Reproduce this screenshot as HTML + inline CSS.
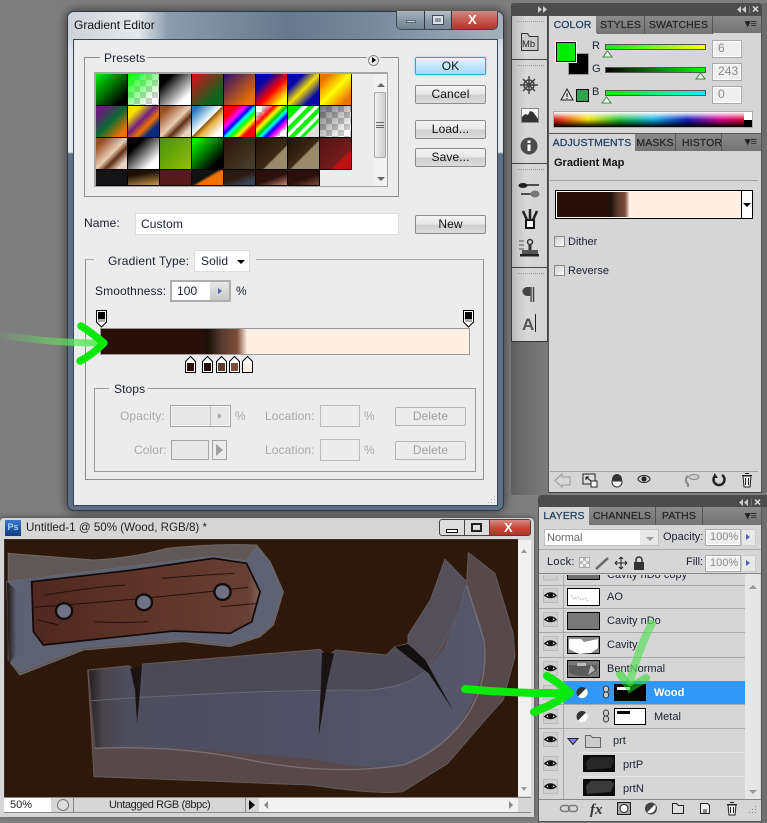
<!DOCTYPE html>
<html><head><meta charset="utf-8"><style>
html,body{margin:0;padding:0;width:767px;height:823px;overflow:hidden;background:#7e7e7e}
*{box-sizing:border-box}
body{position:relative;font:12px "Liberation Sans",sans-serif;color:#1a2030;letter-spacing:.1px}
div,span.t{position:absolute}
.t{white-space:nowrap;line-height:14px}
.s{font-size:11px;letter-spacing:0}
.b{border-radius:2px;border:1px solid #8c8c8c;background:linear-gradient(#f4f4f4,#e8e8e8 45%,#cfcfcf 55%,#dcdcdc);text-align:center;line-height:17px;color:#111;left:415px;width:71px;height:19px}
.f{border:1px solid #8e8e8e}
.c{width:32px;height:32px;border-right:1px solid #000;border-bottom:1px solid #000}
.tab{top:0;height:18px;background:linear-gradient(#8a8a8a,#747474);border-right:1px solid #555;font-size:10.5px;color:#262626;-webkit-text-stroke:.25px #262626;text-align:center;line-height:18px;letter-spacing:.1px}
.act{background:#d6d6d6;color:#23405f;-webkit-text-stroke:.25px #23405f;border:0}
.g{color:#a8a8a8}
.in{background:#efefef;border:1px solid #aaa;box-shadow:inset 0 0 0 1px #fff;color:#8a8a8a;font-size:12px;padding-left:5px;line-height:15px}
.th{width:33px;height:18px;border:1px solid #000}
.menu{color:#222;font:bold 11px 'Liberation Sans';line-height:12px;text-align:right;white-space:nowrap}
</style></head><body>

<!-- right panel group -->
<div style="left:511px;top:342px;width:37px;height:153px;background:linear-gradient(90deg,#626262,#7c7c7c)"></div>
<div style="left:511px;top:3px;width:251px;height:13px;background:#4c4c4c;border-radius:3px 3px 0 0"></div>
<div style="left:511px;top:16px;width:2px;height:326px;background:#3d3d3d"></div>
<div style="left:512px;top:16px;width:36px;height:326px;background:linear-gradient(90deg,#bdbdbd,#d8d8d8 40%,#d4d4d4);border-bottom:1px solid #333;border-right:1px solid #444"></div>
<div style="left:548px;top:16px;width:214px;height:477px;background:#d6d6d6;border-left:1px solid #555;border-right:1px solid #555;border-bottom:1px solid #444"></div>
<div style="left:762px;top:3px;width:5px;height:490px;background:#6c6c6c"></div>
<div style="left:512px;top:59px;width:36px;height:1px;background:#444"></div>
<div style="left:512px;top:163px;width:36px;height:1px;background:#444"></div>
<div style="left:512px;top:267px;width:36px;height:1px;background:#444"></div>
<svg style="position:absolute;left:511px;top:3px" width="251" height="13"><g fill="#ccc"><path d="M27 3l4 3.500-4 3.500zM32 3l4 3.500-4 3.500z"/><path d="M230 3l-4 3.500 4 3.500zM235 3l-4 3.500 4 3.500z"/></g><path d="M238.500 3v7" stroke="#777"/><path d="M242 3.500l5 5M247 3.500l-5 5" stroke="#ddd" stroke-width="1.500"/></svg>
<svg style="position:absolute;left:512px;top:16px" width="36" height="326" viewBox="0 0 36 326">
<g stroke="#999" stroke-dasharray="1 1" fill="none"><path d="M5 5.500H32M5 49.500H32M5 153.500H32M5 257.500H32"/></g>
<path d="M9.500 17.500h6l2 3h8.500v14H9.500z" fill="#ccc" stroke="#333"/><text x="10" y="31" font-size="9.500" font-family="Liberation Sans" fill="#222" letter-spacing="0">Mb</text>
<g stroke="#444" fill="none" stroke-width="1.500"><circle cx="17" cy="69" r="5"/><circle cx="17" cy="69" r="1.500" fill="#444"/><path d="M17 60V78M8 69H26M11 63L23 75M23 63L11 75"/></g>
<rect x="9.500" y="92.500" width="17" height="14" fill="#f4f4f4" stroke="#888"/><path d="M10 106V101L13 98 16 99 18 95 21 96 24 100 26 103V106z" fill="#333"/>
<circle cx="17" cy="130" r="8.500" fill="#4c4c4c"/><rect x="15.500" y="128.500" width="3" height="6.500" fill="#fff"/><rect x="15.500" y="124.500" width="3" height="2.500" fill="#fff"/>
<path d="M7 169H27M9 178H20" stroke="#222" stroke-width="1.500"/><ellipse cx="11" cy="169.500" rx="4.500" ry="2.500" fill="#222"/><ellipse cx="23" cy="178" rx="4.500" ry="3.500" fill="#777"/>
<rect x="14" y="204" width="8" height="8" fill="#fff" stroke="#111" stroke-width="2"/><path d="M15 204L11 195M18 204V193M21 204L25 195" stroke="#222" stroke-width="2.500"/>
<path d="M7 225h5M7 229h5M7 233h5" stroke="#555"/><circle cx="18" cy="226" r="2.500" fill="none" stroke="#333" stroke-width="1.500"/><rect x="16.500" y="228" width="3" height="6" fill="#333"/><rect x="10" y="234" width="16" height="4" fill="#555"/><rect x="8" y="238" width="19" height="2.500" fill="#222"/>
<path d="M19 271h-4a4.500 4.500 0 0 0 0 9h4z" fill="#444"/><path d="M19 271v15" stroke="#555" stroke-width="1.500"/><path d="M21.500 271v15" stroke="#444" stroke-width="1.500"/>
<text x="10" y="314" font-size="17" font-family="Liberation Sans" font-weight="bold" fill="#555" letter-spacing="0">A</text><path d="M23.500 298V316" stroke="#222"/>
</svg>

<!-- color tabs -->
<div style="left:549px;top:16px;width:212px;height:17px;background:linear-gradient(#8a8a8a,#737373)"></div>
<div style="left:549px;top:16px;width:212px;height:17px">
<div class="tab act" style="left:0;width:47px">COLOR</div>
<div class="tab" style="left:48px;width:48px">STYLES</div>
<div class="tab" style="left:96px;width:68px">SWATCHES</div>
<div class="menu" style="left:183px;top:2px;width:25px;height:12px">▾≡</div>
</div>
<div style="left:569px;top:54px;width:19px;height:20px;background:#000;border:1px solid #000;box-shadow:0 0 0 1px #999"></div>
<div style="left:556px;top:42px;width:20px;height:20px;background:#00ed00;border:1px solid #000;box-shadow:0 0 0 1px #fff"></div>
<span class="t s" style="left:592px;top:39px">R</span>
<span class="t s" style="left:592px;top:62px">G</span>
<span class="t s" style="left:592px;top:85px">B</span>
<div style="left:605px;top:44px;width:101px;height:6px;background:linear-gradient(90deg,#06f300,#ffff00);border:1px solid #555"></div>
<div style="left:605px;top:67px;width:101px;height:6px;background:linear-gradient(90deg,#060000,#06ff00);border:1px solid #555"></div>
<div style="left:605px;top:90px;width:101px;height:6px;background:linear-gradient(90deg,#06f300,#06f3ff);border:1px solid #555"></div>
<svg style="position:absolute;left:600px;top:50px" width="110" height="55"><g fill="#fff" stroke="#3a8a3a"><path d="M3 7L7.500 1 12 7z"/><path d="M96 29L100.500 23 105 29z"/><path d="M2 53L6.500 47 11 53z"/></g></svg>
<div class="in" style="left:712px;top:40px;width:30px;height:18px">6</div>
<div class="in" style="left:712px;top:63px;width:30px;height:18px">243</div>
<div class="in" style="left:712px;top:86px;width:30px;height:18px">0</div>
<svg style="position:absolute;left:560px;top:88px" width="14" height="14"><path d="M7 1L13 12H1z" fill="#ddd" stroke="#222"/><path d="M7 5v4M7 10v1" stroke="#111"/></svg>
<div style="left:576px;top:89px;width:13px;height:13px;background:#2fa34f;border:1px solid #000"></div>
<div style="left:553px;top:111px;width:200px;height:17px;border:1px solid #aaa;background:linear-gradient(#fff,rgba(255,255,255,0) 50%,#000),linear-gradient(90deg,#e0101a,#f5e000 17%,#20c030 33%,#10b0e8 50%,#1020c0 67%,#e00090 84%,#e0101a)"></div>
<div style="left:744px;top:112px;width:8px;height:8px;background:#fff"></div>
<div style="left:744px;top:120px;width:8px;height:7px;background:#000"></div>

<!-- adjustments -->
<div style="left:549px;top:133px;width:212px;height:18px;background:linear-gradient(#8a8a8a,#737373);border-top:1px solid #555"></div>
<div style="left:549px;top:134px;width:212px;height:18px">
<div class="tab act" style="left:0;width:86px;height:17px">ADJUSTMENTS</div>
<div class="tab" style="left:86px;width:41px;height:17px">MASKS</div>
<div class="tab" style="left:127px;width:46px;height:17px;overflow:hidden;text-align:left;padding-left:6px">HISTORY</div>
<div class="menu" style="left:183px;top:2px;width:25px;height:12px">▾≡</div>
</div>
<span class="t s" style="left:554px;top:156px;font-weight:bold;color:#111">Gradient Map</span>
<div style="left:550px;top:180px;width:208px;height:1px;background:#a0a0a0"></div>
<div style="left:555px;top:190px;width:198px;height:29px;border:1px solid #000;background:#fff"></div>
<div style="left:557px;top:192px;width:184px;height:25px;background:linear-gradient(90deg,#2a0f0a,#2a0f0a 27%,#1b0f09 29%,#5a3c30 33%,#7d4d38 37%,#fff0e5 39.500%,#fff0e5)"></div>
<div style="left:741px;top:191px;width:1px;height:27px;background:#000"></div>
<div style="left:743px;top:203px;width:0;height:0;border:4px solid transparent;border-top:4px solid #000"></div>
<div style="left:554px;top:236px;width:11px;height:11px;background:linear-gradient(135deg,#ccc,#fff);border:1px solid #888"></div>
<span class="t s" style="left:568px;top:235px">Dither</span>
<div style="left:554px;top:265px;width:11px;height:11px;background:linear-gradient(135deg,#ccc,#fff);border:1px solid #888"></div>
<span class="t s" style="left:568px;top:264px">Reverse</span>
<div style="left:550px;top:471px;width:208px;height:1px;background:#a0a0a0"></div>
<svg style="position:absolute;left:550px;top:472px" width="210" height="20">
<path d="M5 8.500L12 2V5H20V13H12V15z" fill="#d8d8d8" stroke="#999"/>
<rect x="33" y="2" width="12" height="10" fill="#ddd" stroke="#222"/><rect x="41" y="9" width="6" height="6" fill="#fff" stroke="#222"/><path d="M36 5L41 9M36 5h3M36 5v3" stroke="#111" fill="none"/>
<path d="M62 7a5 5 0 0 1 10 0V9H62z" fill="#333"/><path d="M62 9h10v1a5 5 0 0 1-10 0z" fill="#fff" stroke="#333"/>
<ellipse cx="94" cy="7" rx="6" ry="3.500" fill="#ccc" stroke="#222"/><circle cx="94" cy="7" r="2.500" fill="#222"/>
<ellipse cx="144" cy="5" rx="5" ry="2.500" fill="#ccc" stroke="#888"/><path d="M138 4a5 5 0 0 0 0 8v3" fill="none" stroke="#888" stroke-width="2"/>
<path d="M166 3A5.500 5.500 0 1 0 172 3" fill="none" stroke="#222" stroke-width="2.500"/><path d="M164 1v5h4" fill="#222"/>
<path d="M193 4h8l-1 11h-6z" fill="#eee" stroke="#222"/><path d="M192 3.500h10M195 1.500h4M195.500 6v7M198.500 6v7" stroke="#222"/>
</svg>

<!-- dialog -->
<div style="left:67px;top:11px;width:437px;height:500px;border-radius:7px;border:1px solid #2d3a48;background:linear-gradient(#b8c0c8,#dfe3e7 40px,#e4e7ea 140px,#5f7086 142px,#5f7086);box-shadow:0 0 11px rgba(0,0,0,.6)"></div>
<div style="left:68px;top:12px;width:435px;height:27px;border-radius:6px 6px 0 0;background:linear-gradient(90deg,#cdd2d7 0,#e6e9eb 70px,#8d9cac 100px,#66798e 220px,#76889b 300px,#a7b1ba 435px)"></div>
<span class="t" style="left:74px;top:18px;color:#111;letter-spacing:0">Gradient Editor</span>
<div style="left:396px;top:11px;width:102px;height:19px;border:1px solid #3b4956;border-top:0;border-radius:0 0 5px 5px;background:#7b8b9a;overflow:hidden">
<div style="left:0;top:0;width:28px;height:18px;background:linear-gradient(#a8b2bb,#8b99a6 50%,#73828f);border-right:1px solid #334"></div>
<div style="left:9px;top:9px;width:10px;height:3px;background:#cfd5da;border:1px solid #566"></div>
<div style="left:28px;top:0;width:27px;height:18px;background:linear-gradient(#b8c1c8,#8d9aa6 50%,#7a8894);border-right:1px solid #334"></div>
<div style="left:36px;top:5px;width:10px;height:8px;border:2px solid #dfe3e6;box-shadow:0 0 0 1px #445"></div>
<div style="left:55px;top:0;width:47px;height:18px;background:linear-gradient(#cf8b85,#c55a50 50%,#b5342a)"></div>
<span class="t" style="left:71px;top:2px;color:#fff;font:bold 13px 'Liberation Sans';line-height:14px">X</span>
</div>
<div style="left:73px;top:39px;width:425px;height:467px;background:#ececec;border:1px solid #36475a"></div>
<svg style="position:absolute;left:486px;top:494px" width="11" height="11"><g fill="#aaa"><rect x="8" y="2" width="1" height="1"/><rect x="5" y="5" width="1" height="1"/><rect x="8" y="5" width="1" height="1"/><rect x="2" y="8" width="1" height="1"/><rect x="5" y="8" width="1" height="1"/><rect x="8" y="8" width="1" height="1"/></g></svg>

<!-- presets -->
<div class="f" style="left:84px;top:57px;width:315px;height:140px"></div>
<div style="left:100px;top:50px;width:47px;height:14px;background:#ececec"></div>
<span class="t" style="left:104px;top:51px;">Presets</span>
<div style="left:368px;top:55px;width:11px;height:11px;background:#ececec;border:1px solid #888;border-radius:50%;box-shadow:0 0 0 2px #ececec"></div>
<div style="left:372px;top:57px;width:0;height:0;border:3.500px solid transparent;border-left:4.500px solid #000"></div>
<div style="left:94px;top:72px;width:294px;height:115px;background:#ececec;border:2px solid #a5a5a5;border-bottom-width:1px"></div>
<div style="left:374px;top:74px;width:13px;height:112px;background:#f2f2f2"></div>
<div style="left:374px;top:92px;width:12px;height:66px;background:linear-gradient(90deg,#f0f0f0,#cfcfcf);border:1px solid #aaa;border-radius:2px"></div>
<div style="left:376px;top:122px;width:8px;height:6px;border-top:1px solid #666;border-bottom:1px solid #666"></div>
<div style="left:376px;top:125px;width:8px;height:1px;background:#666"></div>
<div style="left:377px;top:79px;width:0;height:0;border:4px solid transparent;border-bottom:4px solid #666"></div>
<div style="left:377px;top:177px;width:0;height:0;border:4px solid transparent;border-top:4px solid #666"></div>
<div style="left:96px;top:74px;width:256px;height:112px;overflow:hidden">
<div class="c" style="left:0;top:0;background:linear-gradient(135deg,#00f000,#000 85%)"></div>
<div class="c" style="left:32px;top:0;background:linear-gradient(135deg,#00ff00,rgba(0,255,0,0) 80%),repeating-conic-gradient(#ccc 0 25%,#fff 0 50%) 0 0/12px 12px"></div>
<div class="c" style="left:64px;top:0;background:linear-gradient(135deg,#000 20%,#fff 80%)"></div>
<div class="c" style="left:96px;top:0;background:linear-gradient(135deg,#e00c1c,#0a661e 75%)"></div>
<div class="c" style="left:128px;top:0;background:linear-gradient(135deg,#2c1070,#f07000 85%)"></div>
<div class="c" style="left:160px;top:0;background:linear-gradient(135deg,#0808a8 25%,#f00 55%,#ff0 85%)"></div>
<div class="c" style="left:192px;top:0;background:linear-gradient(135deg,#0808a8 25%,#f5e000 50%,#0808a8 78%)"></div>
<div class="c" style="left:224px;top:0;background:linear-gradient(135deg,#f07000 15%,#ff0 50%,#f07000 85%)"></div>
<div class="c" style="left:0;top:32px;background:linear-gradient(135deg,#6a1a80 15%,#0a6a30 50%,#f07000 85%)"></div>
<div class="c" style="left:32px;top:32px;background:linear-gradient(135deg,#f5e000 20%,#702080 45%,#f07000 62%,#0a2a80 78%)"></div>
<div class="c" style="left:64px;top:32px;background:linear-gradient(135deg,#974f20 15%,#eccdb5 50%,#5d2e14 65%,#ecd5c2 85%)"></div>
<div class="c" style="left:96px;top:32px;background:linear-gradient(135deg,#1b7ac0 10%,#fff 48%,#8a5a10 50%,#e8b040 60%,#fff 85%)"></div>
<div class="c" style="left:128px;top:32px;background:linear-gradient(135deg,#f00 20%,#f0f 35%,#00f 45%,#0ff 52%,#0f0 60%,#ff0 70%,#f00 80%)"></div>
<div class="c" style="left:160px;top:32px;background:linear-gradient(135deg,rgba(255,0,0,0) 15%,#f00 30%,#ff0 40%,#0c0 50%,#0ff 57%,#00f 65%,#f0f 75%,rgba(255,0,255,0) 85%),repeating-conic-gradient(#ccc 0 25%,#fff 0 50%) 0 0/12px 12px"></div>
<div class="c" style="left:192px;top:32px;background:linear-gradient(135deg,#00f000 22%,#fff 24%,#fff 32%,#00f000 34%,#00f000 42%,#fff 44%,#fff 50%,#00f000 52%,#00f000 60%,#fff 62%,#fff 68%,#00f000 70%,#00f000 75%,#ddd 77%)"></div>
<div class="c" style="left:224px;top:32px;background:linear-gradient(135deg,rgba(0,0,0,.55),rgba(0,0,0,0) 85%),repeating-conic-gradient(#ccc 0 25%,#fff 0 50%) 0 0/12px 12px"></div>
<div class="c" style="left:0;top:64px;background:linear-gradient(135deg,#974f20 15%,#eccdb5 50%,#5d2e14 65%,#ecd5c2 85%)"></div>
<div class="c" style="left:32px;top:64px;background:linear-gradient(135deg,#000 25%,#fff 80%)"></div>
<div class="c" style="left:64px;top:64px;background:linear-gradient(135deg,#4a9010,#90c000)"></div>
<div class="c" style="left:96px;top:64px;background:linear-gradient(135deg,#00f000 10%,#000 80%)"></div>
<div class="c" style="left:128px;top:64px;background:linear-gradient(135deg,#2a140a,#3a2a18 50%,#4c4230)"></div>
<div class="c" style="left:160px;top:64px;background:linear-gradient(135deg,#1e1208,#3c2a14 60%,#998a6d 64%)"></div>
<div class="c" style="left:192px;top:64px;background:linear-gradient(135deg,#1e1208,#3c2a14 52%,#998a6d 56%)"></div>
<div class="c" style="left:224px;top:64px;background:linear-gradient(135deg,#551414,#701c1c 65%,#c01010 72%)"></div>
<div class="c" style="left:0;top:96px;height:16px;background:#141416"></div>
<div class="c" style="left:32px;top:96px;height:16px;background:linear-gradient(170deg,#1c1008 30%,#c89a4a 100%)"></div>
<div class="c" style="left:64px;top:96px;height:16px;background:#561a1a"></div>
<div class="c" style="left:96px;top:96px;height:16px;background:linear-gradient(150deg,#111 45%,#f07000 55%)"></div>
<div class="c" style="left:128px;top:96px;height:16px;background:linear-gradient(160deg,#2a1a10 45%,#3a4454 80%)"></div>
<div class="c" style="left:160px;top:96px;height:16px;background:linear-gradient(160deg,#2a0f0a 55%,#c08a70 100%)"></div>
<div class="c" style="left:192px;top:96px;height:16px;background:linear-gradient(160deg,#2a0f0a 55%,#7a5038 100%)"></div>
</div>

<div class="b" style="top:57px;height:18px;border:1px solid #2ea8d8;background:linear-gradient(#e8f6ff,#bfe6fb 50%,#a5dbf8);box-shadow:0 0 2px #7cd">OK</div>
<div class="b" style="top:85px">Cancel</div>
<div class="b" style="top:120px">Load...</div>
<div class="b" style="top:148px">Save...</div>
<div class="b" style="top:215px">New</div>
<span class="t" style="left:84px;top:216px">Name:</span>
<div style="left:135px;top:213px;width:264px;height:22px;background:#fff;border:1px solid #ddd"></div>
<span class="t" style="left:141px;top:216.500px">Custom</span>

<!-- gradient frame -->
<div class="f" style="left:85px;top:259px;width:399px;height:221px;border-top-color:#aaa"></div>
<div style="left:94px;top:252px;width:162px;height:14px;background:#ececec"></div>
<span class="t" style="left:108px;top:254px;letter-spacing:.2px">Gradient Type:</span>
<div style="left:194px;top:250px;width:56px;height:22px;background:#fff;border:1px solid #ddd"></div>
<span class="t" style="left:201px;top:254px">Solid</span>
<div style="left:237px;top:260px;width:0;height:0;border:4px solid transparent;border-top:4px solid #000"></div>
<span class="t" style="left:95px;top:283.500px">Smoothness:</span>
<div style="left:170px;top:280px;width:61px;height:22px;background:#fff;border:2px solid #adadad"></div>
<div style="left:210px;top:282px;width:19px;height:18px;background:linear-gradient(#e8e8e8,#c8c8c8)"></div>
<div style="left:218px;top:288px;width:0;height:0;border:3px solid transparent;border-left:4px solid #4c5fb0"></div>
<span class="t" style="left:177px;top:284px">100</span>
<span class="t" style="left:236px;top:284px">%</span>

<div style="left:100px;top:328px;width:370px;height:27px;border:1px solid #999;background:linear-gradient(90deg,#2a0f0a,#2a0f0a 27%,#1b0f09 29%,#5a3c30 33%,#7d4d38 37%,#fff0e5 39.700%,#fff0e5)"></div>
<svg style="position:absolute;left:95px;top:308px" width="385" height="70">
<g stroke="#000" fill="#fff"><path d="M1.500 2.500H11.500V14L6.500 19 1.500 14z"/><path d="M368.500 2.500H378.500V14L373.500 19 368.500 14z"/></g>
<rect x="3" y="4" width="7" height="7" fill="#000"/><rect x="370" y="4" width="7" height="7" fill="#000"/>
<rect x="3" y="11" width="7" height="3" fill="#aaa"/><rect x="370" y="11" width="7" height="3" fill="#aaa"/>
<g stroke="#000" fill="#fff"><path d="M90.500 64.500V53.500L95.500 48.500 100.500 53.500V64.500z"/><path d="M107.500 64.500V53.500L112.500 48.500 117.500 53.500V64.500z"/><path d="M121.500 64.500V53.500L126.500 48.500 131.500 53.500V64.500z"/><path d="M134.500 64.500V53.500L139.500 48.500 144.500 53.500V64.500z"/><path d="M147.500 64.500V53.500L152.500 48.500 157.500 53.500V64.500z"/></g>
<rect x="92" y="55" width="7" height="8" fill="#2a0f0a"/><rect x="109" y="55" width="7" height="8" fill="#1f1109"/><rect x="123" y="55" width="7" height="8" fill="#5a3c30"/><rect x="136" y="55" width="7" height="8" fill="#7d4d38"/><rect x="149" y="55" width="7" height="8" fill="#fff0e5"/>
</svg>

<div class="f" style="left:94px;top:388px;width:382px;height:84px;border-color:#9a9a9a"></div>
<div style="left:109px;top:382px;width:39px;height:14px;background:#ececec"></div>
<span class="t" style="left:114px;top:382px">Stops</span>
<span class="t g" style="left:120px;top:409px">Opacity:</span>
<div style="left:170px;top:405px;width:61px;height:22px;border:1px solid #a5a5a5;box-shadow:inset 0 0 0 1px #f5f5f5;background:#e8e8e8"></div>
<div style="left:210px;top:406px;width:1px;height:20px;background:#bbb"></div>
<div style="left:218px;top:413px;width:0;height:0;border:3px solid transparent;border-left:4px solid #aaa"></div>
<span class="t g" style="left:235px;top:409px">%</span>
<span class="t g" style="left:265px;top:409px">Location:</span>
<div style="left:320px;top:405px;width:40px;height:22px;border:1px solid #bbb;background:#ececec"></div>
<span class="t g" style="left:364px;top:409px">%</span>
<div class="b g" style="left:395px;top:407px;width:71px;background:#ececec;border-color:#b5b5b5;color:#a0a0a0">Delete</div>
<span class="t g" style="left:134px;top:443px">Color:</span>
<div style="left:171px;top:440px;width:38px;height:20px;border:1px solid #a5a5a5;background:#e8e8e8"></div>
<div style="left:212px;top:440px;width:15px;height:20px;border:1px solid #a5a5a5"></div>
<div style="left:216px;top:444px;width:0;height:0;border:6px solid transparent;border-left:7px solid #a0a0a0"></div>
<span class="t g" style="left:265px;top:443px">Location:</span>
<div style="left:320px;top:439px;width:40px;height:22px;border:1px solid #bbb;background:#ececec"></div>
<span class="t g" style="left:364px;top:443px">%</span>
<div class="b g" style="left:395px;top:441px;width:71px;background:#ececec;border-color:#b5b5b5;color:#a0a0a0">Delete</div>

<!-- dialog arrow -->
<svg style="position:absolute;left:0;top:315px" width="120" height="60"><defs><linearGradient id="a"><stop offset="0" stop-color="#5fe85f" stop-opacity=".05"/><stop offset="1" stop-color="#5fe85f"/></linearGradient></defs>
<path d="M0 20Q50 28 100 28" stroke="url(#a)" stroke-width="7" fill="none"/>
<path d="M81 11Q92 18 104 28 92 40 80 46" stroke="#0ae80a" stroke-width="7.500" fill="none" stroke-linecap="round" stroke-linejoin="round"/></svg>

<!-- document window -->
<div style="left:0;top:518px;width:534px;height:299px;background:#d6d6d6;border-radius:4px 4px 0 0;box-shadow:0 -1px 5px rgba(0,0,0,.4)"></div>
<div style="left:5px;top:520px;width:16px;height:16px;background:linear-gradient(#3b78c8,#0d3d7e);color:#a6d6ff;font:bold 9px 'Liberation Sans';text-align:center;line-height:15px;letter-spacing:0">Ps</div>
<span class="t" style="left:26px;top:521px;font-size:11.600px;color:#222;letter-spacing:0">Untitled-1 @ 50% (Wood, RGB/8) *</span>
<div style="left:439px;top:519px;width:92px;height:17px;border:1px solid #444;border-radius:3px;background:#dcdcdc;overflow:hidden">
<div style="left:24px;top:0;width:1px;height:16px;background:#444"></div><div style="left:49px;top:0;width:1px;height:16px;background:#444"></div>
<div style="left:6px;top:9px;width:12px;height:4px;border:1px solid #111;background:#fff"></div>
<div style="left:31px;top:3px;width:11px;height:9px;border:2px solid #222"></div>
<div style="left:50px;top:0;width:42px;height:16px;background:linear-gradient(#d98a80,#c8483a 50%,#a8301f)"></div>
<span class="t" style="left:64px;top:1px;color:#fff;font:bold 13px 'Liberation Sans';line-height:14px;letter-spacing:0">X</span>
</div>
<div style="left:4px;top:539px;width:514px;height:258px;background:#2e170b;border:1px solid #333;border-width:1px 0 0 1px"></div>
<svg style="position:absolute;left:0;top:510px" width="540" height="313" viewBox="0 0 1568 939" preserveAspectRatio="none">
<defs><linearGradient id="bl" x1="0" x2="1"><stop offset="0" stop-color="#262020"/><stop offset=".035" stop-color="#48434a"/><stop offset=".09" stop-color="#4d4d5c"/><stop offset=".5" stop-color="#4f5063"/><stop offset="1" stop-color="#565869"/></linearGradient>
<linearGradient id="wd" x1="0" x2="1"><stop offset="0" stop-color="#4f281f"/><stop offset=".55" stop-color="#5f3629"/><stop offset=".95" stop-color="#664033"/><stop offset="1" stop-color="#84655a"/></linearGradient>
<linearGradient id="dk" x1="0" x2="1"><stop offset="0" stop-color="#1e1512"/><stop offset="1" stop-color="#1e1512" stop-opacity="0"/></linearGradient>
<linearGradient id="tb" x1="0" x2="1" y1="0" y2="1"><stop offset="0" stop-color="#4b4a54"/><stop offset="1" stop-color="#4b4a56"/></linearGradient></defs>
<g style="filter:blur(.35px)">
<path d="M24 130L271 150Q380 145 484 115Q620 100 745 105L784 155L823 245L794 345L755 380L668 410L532 395L242 420L58 495L24 450Z" fill="#5f5857" stroke="#6e6968" stroke-width="3"/>
<path d="M19 215L92 205L387 168L620 138L716 152L745 112L784 158L818 245L790 342L752 376L668 404L532 388L242 412L60 486L26 448Z" fill="#5e6172" stroke="#686b7a" stroke-width="2"/>
<path d="M20 215L48 240V430L25 465Z" fill="url(#dk)"/>
<path d="M92 215L387 180L620 145L716 160L755 245L731 335L668 370L503 363L126 405L97 365Z" fill="url(#wd)" stroke="#120806" stroke-width="5"/>
<path d="M95 292Q400 270 720 232M130 255Q280 230 365 225M470 205Q580 195 680 190M275 335Q350 340 430 335M640 290Q700 285 750 280M110 330Q130 335 170 345" stroke="#26110b" stroke-width="3" fill="none"/>
<circle cx="186" cy="303" r="27" fill="#130d0c"/><circle cx="186" cy="303" r="20" fill="#6f7282"/>
<circle cx="418" cy="277" r="27" fill="#130d0c"/><circle cx="418" cy="277" r="20" fill="#6f7282"/>
<circle cx="646" cy="246" r="27" fill="#130d0c"/><circle cx="646" cy="246" r="20" fill="#6f7282"/>
<path d="M255 480L375 467L400 495L415 462L930 418L950 440L975 420L1122 435L1147 410L1185 400L1185 375L1250 270L1292 148L1355 215L1360 128L1437 190L1490 370L1495 440L1461 570L1400 640L1300 760L1170 845Q1100 855 900 825L273 800Z" fill="#57494a" stroke="#635a5a" stroke-width="3"/>
<path d="M258 482L375 470L400 495L415 465L930 422L950 440L975 424L1122 437L1147 414L1190 405L1240 475L1290 415L1355 225L1398 350L1408 460L1374 570L1330 650Q1270 730 1180 765Q1080 785 900 745L520 715L278 715Z" fill="url(#bl)"/>
<path d="M415 497L415 465L930 422L950 440L975 424L1122 437L1147 414L1190 405L1239 475L1234 490L1180 520L1074 540L415 558Z" fill="url(#tb)"/>
<path d="M1185 375L1250 270L1292 148L1355 215L1335 300L1282 410L1239 475L1185 400Z" fill="#53505a" stroke="#62606a" stroke-width="2"/>
<path d="M268 572Q700 540 1074 540Q1190 530 1240 478" stroke="#666874" stroke-width="3" fill="none"/>
<path d="M275 715Q500 705 700 745Q950 800 1170 765Q1290 720 1360 610Q1420 510 1405 390L1355 225" stroke="#756f73" stroke-width="4" fill="none"/>
<path d="M1147 410L1185 402L1235 450L1315 600L1245 490L1205 458Z" fill="#141010"/>
<path d="M378 475L412 468L405 560L398 640L392 540Z" fill="#191313"/>
<path d="M935 428L970 430L950 520L925 680L932 520Z" fill="#191313"/>
</g>
<path d="M1350 537Q1370 548 1568 547" stroke="#0be80b" stroke-width="18" fill="none" stroke-linecap="round"/>
<circle cx="1556" cy="606" r="11" fill="#0be80b"/>
</svg>
<div style="left:518px;top:540px;width:13px;height:256px;background:#f0f0f0"></div>
<div style="left:521px;top:546px;width:0;height:0;border:3.500px solid transparent;border-bottom:4px solid #999"></div>
<div style="left:521px;top:787px;width:0;height:0;border:3.500px solid transparent;border-top:4px solid #999"></div>
<div style="left:4px;top:797px;width:527px;height:16px;background:#d6d6d6;border-top:1px solid #888;border-bottom:1px solid #888"></div>
<div style="left:4px;top:798px;width:47px;height:14px;background:#fff"></div>
<span class="t" style="left:10px;top:798px;font-size:11px;letter-spacing:0;color:#222">50%</span>
<div style="left:57px;top:799px;width:12px;height:12px;border:1px solid #777;border-radius:50%;background:#ddd"></div>
<div style="left:73px;top:798px;width:1px;height:14px;background:#888"></div>
<span class="t" style="left:109px;top:798px;font-size:11px;letter-spacing:-.4px;color:#222">Untagged RGB (8bpc)</span>
<div style="left:245px;top:798px;width:1px;height:14px;background:#888"></div>
<div style="left:249px;top:800px;width:0;height:0;border:5px solid transparent;border-left:6px solid #000"></div>
<div style="left:259px;top:798px;width:259px;height:14px;background:#f2f2f2"></div>
<div style="left:264px;top:801px;width:0;height:0;border:4px solid transparent;border-right:4px solid #888;border-left:0"></div>
<div style="left:509px;top:801px;width:0;height:0;border:4px solid transparent;border-left:4px solid #888;border-right:0"></div>

<!-- layers panel -->
<div style="left:538px;top:495px;width:229px;height:14px;background:#4c4c4c;border-radius:4px 0 0 0"></div>
<div style="left:538px;top:507px;width:224px;height:315px;background:#d6d6d6;border:1px solid #555;border-top:0"></div>
<div style="left:762px;top:507px;width:5px;height:316px;background:#6e6e6e"></div>
<div style="left:539px;top:507px;width:222px;height:18px;background:linear-gradient(#8a8a8a,#737373)">
<div class="tab act" style="left:0;width:50px">LAYERS</div>
<div class="tab" style="left:50px;width:67px">CHANNELS</div>
<div class="tab" style="left:117px;width:47px">PATHS</div>
<div class="menu" style="left:190px;top:3px;width:28px;height:12px">▾≡</div>
</div>
<svg style="position:absolute;left:730px;top:496px" width="34" height="12"><path d="M13 3l-4 3.500 4 3.500zM18 3l-4 3.500 4 3.500z" fill="#ccc"/><path d="M21.500 3v7" stroke="#777"/><path d="M25 3.500l5 5M30 3.500l-5 5" stroke="#ddd" stroke-width="1.500"/></svg>
<div style="left:544px;top:529px;width:115px;height:17px;background:#fff;border:1px solid #c0c0c0"></div>
<div style="left:640px;top:530px;width:18px;height:15px;background:#e8e8e8"></div>
<div style="left:646px;top:537px;width:0;height:0;border:4px solid transparent;border-top:4px solid #999"></div>
<span class="t s" style="left:547px;top:531px;color:#666">Normal</span>
<span class="t s" style="left:663px;top:530px">Opacity:</span>
<div class="in" style="left:705px;top:529px;width:36px;height:17px;font-size:11px;padding-left:4px;line-height:14px;letter-spacing:0">100%</div>
<div style="left:741px;top:529px;width:15px;height:17px;background:#e8e8e8;border:1px solid #ccc"></div>
<div style="left:746px;top:534px;width:0;height:0;border:3px solid transparent;border-left:4px solid #4c5fb0"></div>
<div style="left:539px;top:549px;width:222px;height:1px;background:#aaa"></div>
<span class="t s" style="left:547px;top:555px;letter-spacing:.3px">Lock:</span>
<div style="left:579px;top:557px;width:11px;height:11px;background:repeating-conic-gradient(#bbb 0 25%,#eee 0 50%) 0 0/6px 6px;border:1px solid #aaa"></div>
<svg style="position:absolute;left:594px;top:555px" width="70" height="16"><path d="M2 14L14 3" stroke="#666" stroke-width="2.500"/><path d="M27 2V14M21 8H33M27 2l-2 2M27 2l2 2M27 14l-2-2M27 14l2-2M21 8l2-2M21 8l2 2M33 8l-2-2M33 8l-2 2" stroke="#222" fill="none"/><rect x="40" y="7" width="10" height="8" fill="#333"/><path d="M42 7V5a3 3 0 0 1 6 0V7" fill="none" stroke="#333" stroke-width="1.500"/></svg>
<span class="t s" style="left:686px;top:555px">Fill:</span>
<div class="in" style="left:705px;top:555px;width:36px;height:17px;font-size:11px;padding-left:4px;line-height:14px;letter-spacing:0">100%</div>
<div style="left:741px;top:555px;width:15px;height:17px;background:#e8e8e8;border:1px solid #ccc"></div>
<div style="left:746px;top:560px;width:0;height:0;border:3px solid transparent;border-left:4px solid #4c5fb0"></div>
<div style="left:539px;top:573px;width:222px;height:1px;background:#888"></div>

<div style="left:539px;top:575px;width:206px;height:224px;overflow:hidden;background:#d6d6d6">
<div style="left:0;top:10px;width:206px;height:1px;background:#a8a8a8"></div>
<div style="left:28px;top:-13px;width:33px;height:18px;background:#707070;border:1px solid #000"></div>
<span class="t s" style="left:68px;top:-7px">Cavity nDo copy</span>
<div style="left:0;top:33px;width:206px;height:1px;background:#a8a8a8"></div>
<div style="left:0;top:57px;width:206px;height:1px;background:#a8a8a8"></div>
<div style="left:0;top:82px;width:206px;height:1px;background:#a8a8a8"></div>
<div style="left:25px;top:106px;width:181px;height:23px;background:#3298f8"></div>
<div style="left:0;top:129px;width:206px;height:1px;background:#a8a8a8"></div>
<div style="left:0;top:153px;width:206px;height:1px;background:#a8a8a8"></div>
<div style="left:40px;top:177px;width:166px;height:1px;background:#e6e6e6"></div>
<div style="left:40px;top:201px;width:166px;height:1px;background:#e6e6e6"></div>
<div style="left:24px;top:0;width:1px;height:224px;background:#a8a8a8"></div>
<div class="th" style="left:28px;top:13px;background:#fff"></div>
<div class="th" style="left:28px;top:37px;background:#787878"></div>
<div class="th" style="left:28px;top:61px;background:#8a8a8a"></div>
<div class="th" style="left:28px;top:85px;background:#777"></div>
<span class="t s" style="left:68px;top:15px">AO</span>
<span class="t s" style="left:68px;top:39px">Cavity nDo</span>
<span class="t s" style="left:68px;top:63px">Cavity</span>
<span class="t s" style="left:68px;top:87px">BentNormal</span>
<div class="th" style="left:75px;top:109px;height:17px;width:32px;background:#000;border:0"></div>
<div style="left:78px;top:112px;width:13px;height:3px;background:#fff"></div>
<span class="t s" style="left:115px;top:111px;color:#fff;font-weight:bold">Wood</span>
<div class="th" style="left:75px;top:133px;width:32px;height:17px;background:#fff"></div>
<div style="left:78px;top:136px;width:13px;height:3px;background:#000"></div>
<span class="t s" style="left:115px;top:135px">Metal</span>
<span class="t s" style="left:74px;top:159px">prt</span>
<div class="th" style="left:44px;top:180px;width:32px;height:17px;background:#0c0c0c;border:0"></div>
<div class="th" style="left:44px;top:204px;width:32px;height:17px;background:#0c0c0c;border:0"></div>
<span class="t s" style="left:84px;top:183px">prtP</span>
<span class="t s" style="left:84px;top:207px">prtN</span>
<svg style="position:absolute;left:0;top:0" width="206" height="224">
<defs><g id="eye"><rect x="4.500" y="0.500" width="14" height="14" fill="#d0d0d0" stroke="#bbb"/><path d="M6 7.500q5.500-5 11 0q-5.500 4-11 0z" fill="#fff" stroke="#111" stroke-width="1.500"/><circle cx="11.500" cy="7" r="2.500" fill="#111"/></g></defs>
<rect x="4.500" y="-9" width="14" height="14" fill="#d0d0d0" stroke="#bbb"/>
<use href="#eye" y="13"/><use href="#eye" y="37"/><use href="#eye" y="61"/><use href="#eye" y="86"/><use href="#eye" y="110"/><use href="#eye" y="134"/><use href="#eye" y="157"/><use href="#eye" y="181"/><use href="#eye" y="204"/>
<path d="M32 20l3 4 4-2 3 3 4-2 3 3" stroke="#bbb" fill="none" stroke-dasharray="2 1"/>
<path d="M30 64h12l3 3 9-2 5-1v9l-7 5-12 1-10-5z" fill="#fff"/>
<path d="M30 90h28v5l-8 6-10 0-10-3z" fill="#5a5a5a"/><path d="M38 88h9v3h-9zM52 90l4 5-7 5z" fill="#bbb"/>
<path d="M47 187l5-5h20l3 3-3 8-24 2z" fill="#262626"/><path d="M47 211l5-5h20l3 3-3 8-24 2z" fill="#3a3a3a"/>
<circle cx="43" cy="117.500" r="5.500" fill="#333"/><path d="M39 121.500L47 113.500A5.500 5.500 0 0 1 39 121.500z" fill="#fff"/>
<circle cx="43" cy="141.500" r="5.500" fill="#333"/><path d="M39 145.500L47 137.500A5.500 5.500 0 0 1 39 145.500z" fill="#fff"/>
<g fill="#ccc" stroke="#333"><rect x="64.500" y="111" width="5" height="6" rx="2.500"/><rect x="64.500" y="117" width="5" height="6" rx="2.500"/><rect x="64.500" y="135" width="5" height="6" rx="2.500"/><rect x="64.500" y="141" width="5" height="6" rx="2.500"/></g>
<path d="M29 163.500h10l-5 6z" fill="#8080f0" stroke="#222"/>
<path d="M46.500 160.500h5l2 2h8v10h-15z" fill="#ccc" stroke="#666"/>
</svg>
</div>
<div style="left:745px;top:574px;width:15px;height:226px;background:#e6e6e6"></div>
<div style="left:749px;top:581px;width:0;height:0;border:4px solid transparent;border-bottom:4px solid #999"></div>
<div style="left:749px;top:790px;width:0;height:0;border:4px solid transparent;border-top:4px solid #999"></div>
<div style="left:539px;top:799px;width:222px;height:1px;background:#888"></div>
<svg style="position:absolute;left:555px;top:801px" width="205" height="20">
<rect x="5.500" y="4.500" width="9" height="6" rx="3" fill="none" stroke="#777" stroke-width="1.500"/><rect x="13.500" y="4.500" width="9" height="6" rx="3" fill="none" stroke="#777" stroke-width="1.500"/>
<text x="35" y="13" font-family="Liberation Serif" font-style="italic" font-weight="bold" font-size="15" fill="#333" letter-spacing="0">fx</text>
<rect x="62.500" y="1.500" width="13" height="12" fill="#aaa" stroke="#222"/><circle cx="69" cy="7.500" r="4" fill="#fff" stroke="#222"/>
<circle cx="96" cy="7.500" r="6" fill="#444"/><path d="M92 11.500L100 3.500A6 6 0 0 1 92 11.500z" fill="#fff"/>
<path d="M117.500 2.500h4l2 2h5v8h-11z" fill="#ddd" stroke="#222"/>
<path d="M145.500 2.500h7l2 2v8h-9z" fill="#eee" stroke="#222"/><rect x="148" y="8" width="4" height="4" fill="#888"/>
<path d="M173 4h8l-1 10h-6z" fill="#eee" stroke="#222"/><path d="M172 3.500h10M175 1.500h4M175.500 6v6M178.500 6v6" stroke="#222"/>
<g fill="#888"><rect x="200" y="5" width="1" height="1"/><rect x="197" y="8" width="1" height="1"/><rect x="200" y="8" width="1" height="1"/><rect x="194" y="11" width="1" height="1"/><rect x="197" y="11" width="1" height="1"/><rect x="200" y="11" width="1" height="1"/></g>
</svg>

<!-- layers arrows -->
<svg style="position:absolute;left:460px;top:620px" width="210" height="100">
<path d="M192 3Q178 30 170 62" stroke="#5ee05e" stroke-width="8" fill="none" opacity=".7" stroke-linecap="round"/>
<path d="M160 54L170 68 186 58" stroke="#22dd22" stroke-width="8" fill="none" opacity=".55" stroke-linecap="round"/>
<path d="M5 69Q60 74 108 73" stroke="#0be80b" stroke-width="8" fill="none" stroke-linecap="round"/>
<path d="M87 56Q98 62 110 73 95 84 74 92" stroke="#0be80b" stroke-width="8" fill="none" stroke-linecap="round" stroke-linejoin="round"/>
</svg>
</body></html>
